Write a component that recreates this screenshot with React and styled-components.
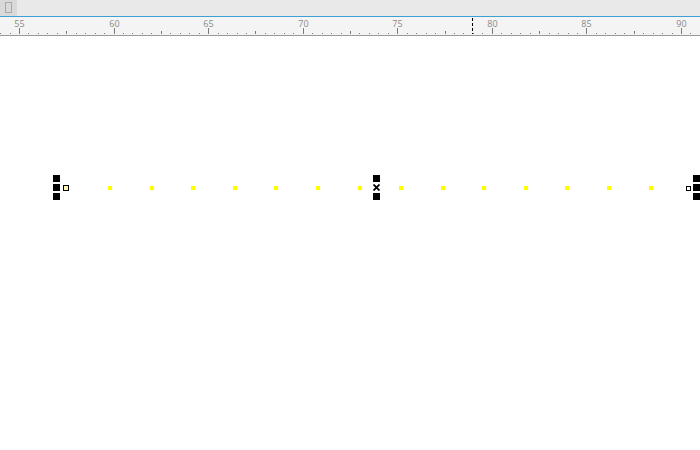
import styled, { createGlobalStyle } from "styled-components";

const GlobalStyle = createGlobalStyle`
  html, body {
    margin: 0;
    padding: 0;
    background: #ffffff;
    font-family: "Open Sans", "Liberation Sans", sans-serif;
  }
`;

const Page = styled.div`
  width: 700px;
  height: 450px;
  display: flex;
  flex-direction: column;
  overflow: hidden;
`;

const Toolbar = styled.div`
  height: 16px;
  display: flex;
  background: #e9e9e9;
  border-bottom: 1px solid #3d9fd4;
`;

const ToolButton = styled.div`
  width: 17px;
  height: 16px;
  display: flex;
  align-items: center;
  justify-content: center;
  background: #d9d9d9;
`;

const PageIcon = styled.div`
  width: 5px;
  height: 9px;
  margin-bottom: 2px;
  border: 1px solid #a9a9a9;
`;

const RulerBar = styled.div`
  height: 18px;
  background: #f4f4f4;
  border-bottom: 1px solid #9a9a9a;
`;

const Canvas = styled.div`
  position: relative;
  flex: 1;
  background: #ffffff;
`;

const Stack = styled.div`
  position: absolute;
  top: ${(p) => p.$top}px;
  left: ${(p) => p.$left}px;
  display: flex;
  flex-direction: column;
  gap: 2px;
`;

const Block = styled.div`
  width: 7px;
  height: 7px;
  background: ${(p) => (p.$empty ? "transparent" : "#000")};
  display: flex;
  align-items: center;
  justify-content: center;
`;

const Port = styled.div`
  position: absolute;
  top: ${(p) => p.$top}px;
  left: ${(p) => p.$left}px;
  width: ${(p) => p.$size}px;
  height: ${(p) => p.$size}px;
  box-sizing: border-box;
  border: 1px solid #000;
  background: ${(p) => p.$fill};
`;

const Dot = styled.div`
  position: absolute;
  top: 150px;
  width: 4px;
  height: 4px;
  background: #ffff00;
  box-shadow: 0 0 1px #ffff40;
`;

const UNIT = 18.914;
const START = 55;
const ORIGIN = 19;

const Ruler = () => {
  const ticks = [];
  for (let v = 54; v <= 91.01; v += 0.5) {
    const x = Math.round(ORIGIN + (v - START) * UNIT) + 0.5;
    const major = Math.abs(v % 5) < 0.01;
    const mid = Math.abs(v % 5 - 2.5) < 0.01;
    const h = major ? 6 : mid ? 3 : 1;
    ticks.push(
      <line key={v} x1={x} x2={x} y1={17 - h} y2={17} stroke="#7a7a7a" strokeWidth="1" />
    );
    if (major) {
      ticks.push(
        <text key={`t${v}`} x={x} y={10} fontSize="9" fill="#8a8a8a" textAnchor="middle"
          fontFamily="'Open Sans', 'Liberation Sans', sans-serif">
          {v}
        </text>
      );
    }
  }
  return (
    <RulerBar>
      <svg width="700" height="18">
        {ticks}
        <line x1="472.5" x2="472.5" y1="1" y2="17" stroke="#000" strokeDasharray="3 2" />
      </svg>
    </RulerBar>
  );
};

const Cross = () => (
  <svg width="7" height="7" viewBox="0 0 7 7">
    <path d="M0.5 0.5 L6.5 6.5 M6.5 0.5 L0.5 6.5" stroke="#000" strokeWidth="1.8" />
  </svg>
);

const leftDots = [0, 1, 2, 3, 4, 5, 6].map((i) => Math.round(108 + i * 41.6));
const rightDots = [0, 1, 2, 3, 4, 5, 6].map((i) => Math.round(399 + i * 41.6));

export default function App() {
  return (
    <Page>
      <GlobalStyle />
      <Toolbar>
        <ToolButton>
          <PageIcon />
        </ToolButton>
      </Toolbar>
      <Ruler />
      <Canvas>
        <Stack $left={53} $top={139}>
          <Block />
          <Block />
          <Block />
        </Stack>
        <Port $left={63} $top={149} $size={6} $fill="#fff6b0" />
        {leftDots.map((x) => (
          <Dot key={x} style={{ left: x }} />
        ))}
        <Stack $left={373} $top={139}>
          <Block />
          <Block $empty>
            <Cross />
          </Block>
          <Block />
        </Stack>
        {rightDots.map((x) => (
          <Dot key={x} style={{ left: x }} />
        ))}
        <Port $left={686} $top={150} $size={5} $fill="#fff" />
        <Stack $left={693} $top={139}>
          <Block />
          <Block />
          <Block />
        </Stack>
      </Canvas>
    </Page>
  );
}
